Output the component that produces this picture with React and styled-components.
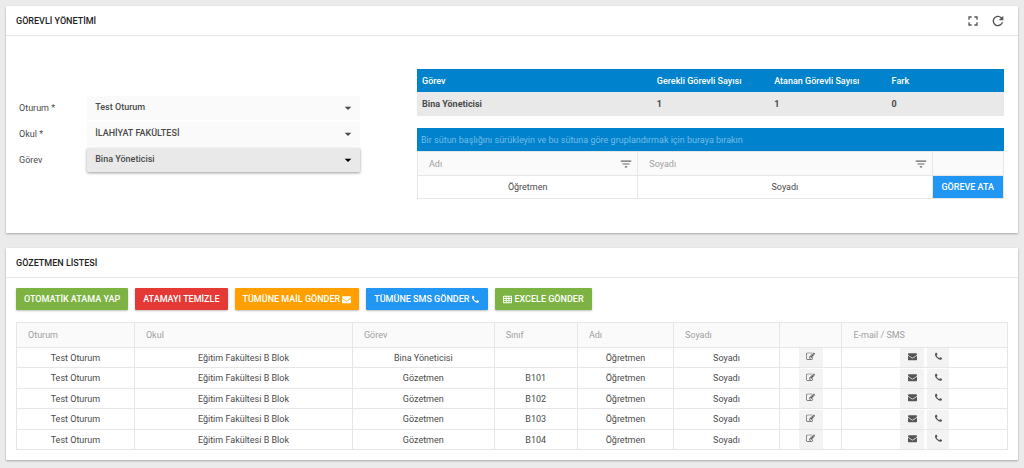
import styled, { createGlobalStyle } from "styled-components";
import { MdArrowDropDown, MdFilterList, MdFullscreen, MdRefresh } from "react-icons/md";

const COLOR = {
  page: "#ebebeb",
  white: "#ffffff",
  text: "#4a4a4a",
  title: "#212121",
  muted: "#a0a0a0",
  line: "#e6e6e6",
  head: "#fafafa",
  primary: "#0082cc",
  blue: "#2196f3",
  green: "#7cb342",
  red: "#e53935",
  orange: "#ffa000",
};

const GlobalStyle = createGlobalStyle`
  * {
    box-sizing: border-box;
  }

  body {
    margin: 0;
    background: ${COLOR.page};
    color: ${COLOR.text};
    font-family: Roboto, "Liberation Sans", sans-serif;
    font-size: 9px;
    line-height: 12px;
  }

  button,
  select {
    font-family: inherit;
    font-size: inherit;
    line-height: inherit;
  }
`;

const Page = styled.main`
  display: flex;
  flex-direction: column;
  gap: 15px;
  padding: 6px 6px 8px;
`;

const Card = styled.section`
  background: ${COLOR.white};
  box-shadow: 0 1px 2px rgba(0, 0, 0, 0.3);
`;

const CardHeader = styled.header`
  display: flex;
  align-items: center;
  justify-content: space-between;
  height: 30px;
  padding: 0 12px 0 10px;
  border-bottom: 1px solid ${COLOR.line};
`;

const CardTitle = styled.h2`
  margin: 0;
  color: ${COLOR.title};
  font-size: 9px;
  font-weight: 500;
`;

const HeaderTools = styled.div`
  display: flex;
  gap: 9px;
`;

const ToolButton = styled.button`
  display: flex;
  padding: 0;
  border: 0;
  background: none;
  color: #555555;
  cursor: pointer;
`;

const ManageBody = styled.div`
  display: grid;
  grid-template-columns: 341fr 587fr;
  column-gap: 57px;
  padding: 33px 14px 34px 13px;
`;

const Form = styled.form`
  display: flex;
  flex-direction: column;
  gap: 2px;
  padding-top: 27px;
`;

const Field = styled.div`
  display: grid;
  grid-template-columns: 1fr 4fr;
  align-items: center;
`;

const SelectWrapper = styled.div`
  position: relative;

  & svg {
    position: absolute;
    top: 4px;
    right: 4px;
    color: ${({ $active }) => ($active ? "#000000" : COLOR.text)};
    pointer-events: none;
  }
`;

const Select = styled.select`
  display: block;
  appearance: none;
  width: 100%;
  height: 24px;
  padding: 0 24px 2px 8px;
  border: 0;
  border-radius: 1px;
  background: ${({ $active }) => ($active ? "#e9e9e9" : COLOR.head)};
  box-shadow: ${({ $active }) => ($active ? "0 1px 3px rgba(0, 0, 0, 0.4)" : "none")};
  color: ${COLOR.text};
  font-weight: 500;
`;

const Tables = styled.div`
  display: flex;
  flex-direction: column;
  gap: 12px;
`;

const SummaryTable = styled.table`
  width: 100%;
  table-layout: fixed;
  border-collapse: collapse;

  & th,
  & td {
    height: 23px;
    padding: 0 5px;
    text-align: left;
    font-weight: 500;
  }
  & th {
    background: ${COLOR.primary};
    color: ${COLOR.white};
  }
  & td {
    height: 24px;
    background: #e9e9e9;
    font-weight: 700;
  }
`;

const GroupBar = styled.div`
  display: flex;
  align-items: center;
  height: 23px;
  padding: 0 4px;
  background: ${COLOR.primary};
  color: #74bde8;
`;

const GridTable = styled.table`
  width: 100%;
  table-layout: fixed;
  border-collapse: collapse;
  border-bottom: 1px solid #d8d8d8;

  & th,
  & td {
    padding: 0;
    border: 1px solid ${COLOR.line};
    text-align: center;
  }
  & th {
    height: ${({ $headHeight }) => $headHeight}px;
    padding: 0 4px 0 11px;
    background: ${COLOR.head};
    color: ${COLOR.muted};
    font-weight: 400;
    text-align: left;
  }
  & td {
    height: ${({ $rowHeight }) => $rowHeight}px;
  }
`;

const ListTable = styled(GridTable)`
  & tbody tr:nth-child(even) td {
    height: 21px;
  }
`;

const ColumnHead = styled.div`
  display: flex;
  align-items: center;
  justify-content: space-between;
`;

const FilterButton = styled(ToolButton)`
  color: #666666;
`;

const Button = styled.button`
  display: inline-flex;
  align-items: center;
  justify-content: center;
  gap: 2px;
  height: 22px;
  padding: 0 8px;
  border: 0;
  border-radius: 1px;
  background: ${({ $color }) => $color};
  box-shadow: 0 1px 2px rgba(0, 0, 0, 0.25);
  color: ${COLOR.white};
  font-weight: 500;
  white-space: nowrap;
  cursor: pointer;
`;

const AssignButton = styled(Button)`
  display: flex;
  width: 100%;
  padding: 0;
  border-radius: 0;
  box-shadow: none;
`;

const ListBody = styled.div`
  padding: 10px;
`;

const Toolbar = styled.div`
  display: flex;
  flex-wrap: wrap;
  gap: 7px;
  margin-bottom: 12px;
`;

const CellActions = styled.div`
  display: flex;
  justify-content: center;
  gap: 3px;
`;

const IconButton = styled.button`
  display: flex;
  align-items: center;
  justify-content: center;
  width: ${({ $narrow }) => ($narrow ? 22 : 24)}px;
  height: 19px;
  padding: 0 0 2px;
  border: 0;
  background: #f3f3f3;
  color: #555555;
  cursor: pointer;
`;

const ICONS = {
  envelope:
    "M1792 710v794q0 66-47 113t-113 47H160q-66 0-113-47T0 1504V710q44 49 101 87 362 246 497 345 57 42 92.500 65.500t94.500 48 110 24.500h2q51 0 110-24.500t94.500-48T1194 1142q170-123 498-345 57-39 100-87zm0-294q0 79-49 151t-122 123q-376 261-468 325-10 7-42.500 31t-54 38.500-52 32.500-57.500 27-50 9h-2q-23 0-50-9t-57.500-27-52-32.500-54-38.500-42.500-31q-91-64-262-182.500T172 690q-62-42-117-115.500T0 438q0-78 41.500-130T160 256h1472q65 0 112.500 47t47.500 113z",
  phone:
    "M1600 1240q0 27-10 70.500t-21 68.500q-21 50-122 106-94 51-186 51-27 0-53-3.500t-57.500-12.500-47-14.500-55.500-20.500-49-18q-98-35-175-83-127-79-264-216t-216-264q-48-77-83-175-3-9-18-49t-20.500-55.500-14.500-47-12.500-57.500-3.500-53q0-92 51-186 56-101 106-122 25-11 68.500-21t70.500-10q14 0 21 3 18 6 53 76 11 19 30 54t35 63.500 31 53.500q3 4 17.500 25t21.500 35.500 7 28.500q0 20-28.500 50t-62 55-62 53-28.500 46q0 9 5 22.500t8.500 20.500 14 24 11.500 19q76 137 174 235t235 174q2 1 19 11.500t24 14 20.500 8.500 22.500 5q18 0 46-28.500t53-62 55-62 50-28.500q14 0 28.500 7t35.500 21.500 25 17.500q25 15 53.500 31t63.500 35 54 30q70 35 76 53 3 7 3 21z",
  edit: "M888 1184l116-116-152-152-116 116v56h96v96h56zm440-720q-16-16-33 1L945 815q-17 17-1 33t33-1l350-350q17-17 1-33zm80 594v190q0 119-84.500 203.500T1120 1536H288q-119 0-203.500-84.500T0 1248V416q0-119 84.500-203.500T288 128h832q63 0 117 25 15 7 18 23 3 17-9 29l-49 49q-14 14-32 8-23-6-45-6H288q-66 0-113 47t-47 113v832q0 66 47 113t113 47h832q66 0 113-47t47-113v-126q0-13 9-22l64-64q15-15 35-7t20 29zm-96-738l288 288-672 672H640V928zm444 132l-92 92-288-288 92-92q28-28 68-28t68 28l152 152q28 28 28 68t-28 68z",
  table:
    "M160 128h1472q160 0 160 160v1216q0 160-160 160H160q-160 0-160-160V288q0-160 160-160zM180 370v240h360V370zm540 0v240h360V370zm540 0v240h360V370zM180 790v240h360V790zm540 0v240h360V790zm540 0v240h360V790zM180 1210v240h360v-240zm540 0v240h360v-240zm540 0v240h360v-240z",
};

function Icon({ name, size = 9 }) {
  return (
    <svg width={size} height={size} viewBox="0 0 1792 1792" fill="currentColor" aria-hidden="true">
      <path fillRule="evenodd" d={ICONS[name]} />
    </svg>
  );
}

function SelectField({ id, label, value, active }) {
  return (
    <Field>
      <label htmlFor={id}>{label}</label>
      <SelectWrapper $active={active}>
        <Select id={id} defaultValue={value} $active={active}>
          <option>{value}</option>
        </Select>
        <MdArrowDropDown size={16} />
      </SelectWrapper>
    </Field>
  );
}

function FilterHead({ label }) {
  return (
    <ColumnHead>
      {label}
      <FilterButton type="button" aria-label={`${label} filtrele`}>
        <MdFilterList size={14} />
      </FilterButton>
    </ColumnHead>
  );
}

const COLUMNS = [
  { label: "Oturum", width: "11.9%" },
  { label: "Okul", width: "22%" },
  { label: "Görev", width: "14.3%" },
  { label: "Sınıf", width: "8.4%" },
  { label: "Adı", width: "9.7%" },
  { label: "Soyadı", width: "10.7%" },
  { label: "", width: "6.3%" },
  { label: "E-mail / SMS", width: "16.7%" },
];

const ROWS = [
  { duty: "Bina Yöneticisi", room: "" },
  { duty: "Gözetmen", room: "B101" },
  { duty: "Gözetmen", room: "B102" },
  { duty: "Gözetmen", room: "B103" },
  { duty: "Gözetmen", room: "B104" },
];

function App() {
  return (
    <>
      <GlobalStyle />
      <Page>
        <Card>
          <CardHeader>
            <CardTitle>GÖREVLİ YÖNETİMİ</CardTitle>
            <HeaderTools>
              <ToolButton type="button" aria-label="Tam ekran">
                <MdFullscreen size={16} />
              </ToolButton>
              <ToolButton type="button" aria-label="Yenile">
                <MdRefresh size={16} />
              </ToolButton>
            </HeaderTools>
          </CardHeader>
          <ManageBody>
            <Form>
              <SelectField id="session" label="Oturum *" value="Test Oturum" />
              <SelectField id="school" label="Okul *" value="İLAHİYAT FAKÜLTESİ" />
              <SelectField id="duty" label="Görev" value="Bina Yöneticisi" active />
            </Form>
            <Tables>
              <SummaryTable>
                <colgroup>
                  <col width="40%" />
                  <col width="20%" />
                  <col width="20%" />
                  <col width="20%" />
                </colgroup>
                <thead>
                  <tr>
                    <th>Görev</th>
                    <th>Gerekli Görevli Sayısı</th>
                    <th>Atanan Görevli Sayısı</th>
                    <th>Fark</th>
                  </tr>
                </thead>
                <tbody>
                  <tr>
                    <td>Bina Yöneticisi</td>
                    <td>1</td>
                    <td>1</td>
                    <td>0</td>
                  </tr>
                </tbody>
              </SummaryTable>
              <div>
                <GroupBar>
                  Bir sütun başlığını sürükleyin ve bu sütuna göre gruplandırmak için buraya bırakın
                </GroupBar>
                <GridTable $headHeight={24} $rowHeight={22}>
                  <colgroup>
                    <col width="37.6%" />
                    <col width="50.2%" />
                    <col width="12.2%" />
                  </colgroup>
                  <thead>
                    <tr>
                      <th>
                        <FilterHead label="Adı" />
                      </th>
                      <th>
                        <FilterHead label="Soyadı" />
                      </th>
                      <th></th>
                    </tr>
                  </thead>
                  <tbody>
                    <tr>
                      <td>Öğretmen</td>
                      <td>Soyadı</td>
                      <td>
                        <AssignButton type="button" $color={COLOR.blue}>
                          GÖREVE ATA
                        </AssignButton>
                      </td>
                    </tr>
                  </tbody>
                </GridTable>
              </div>
            </Tables>
          </ManageBody>
        </Card>

        <Card>
          <CardHeader>
            <CardTitle>GÖZETMEN LİSTESİ</CardTitle>
          </CardHeader>
          <ListBody>
            <Toolbar>
              <Button type="button" $color={COLOR.green}>
                OTOMATİK ATAMA YAP
              </Button>
              <Button type="button" $color={COLOR.red}>
                ATAMAYI TEMİZLE
              </Button>
              <Button type="button" $color={COLOR.orange}>
                TÜMÜNE MAİL GÖNDER
                <Icon name="envelope" />
              </Button>
              <Button type="button" $color={COLOR.blue}>
                TÜMÜNE SMS GÖNDER
                <Icon name="phone" />
              </Button>
              <Button type="button" $color={COLOR.green}>
                <Icon name="table" />
                EXCELE GÖNDER
              </Button>
            </Toolbar>
            <ListTable $headHeight={25} $rowHeight={20}>
              <colgroup>
                {COLUMNS.map((column) => (
                  <col key={column.label} width={column.width} />
                ))}
              </colgroup>
              <thead>
                <tr>
                  {COLUMNS.map((column) => (
                    <th key={column.label}>{column.label}</th>
                  ))}
                </tr>
              </thead>
              <tbody>
                {ROWS.map((row, index) => (
                  <tr key={index}>
                    <td>Test Oturum</td>
                    <td>Eğitim Fakültesi B Blok</td>
                    <td>{row.duty}</td>
                    <td>{row.room}</td>
                    <td>Öğretmen</td>
                    <td>Soyadı</td>
                    <td>
                      <CellActions>
                        <IconButton type="button" aria-label="Düzenle">
                          <Icon name="edit" />
                        </IconButton>
                      </CellActions>
                    </td>
                    <td>
                      <CellActions>
                        <IconButton type="button" aria-label="E-mail gönder">
                          <Icon name="envelope" />
                        </IconButton>
                        <IconButton type="button" aria-label="SMS gönder" $narrow>
                          <Icon name="phone" />
                        </IconButton>
                      </CellActions>
                    </td>
                  </tr>
                ))}
              </tbody>
            </ListTable>
          </ListBody>
        </Card>
      </Page>
    </>
  );
}

export default App;
